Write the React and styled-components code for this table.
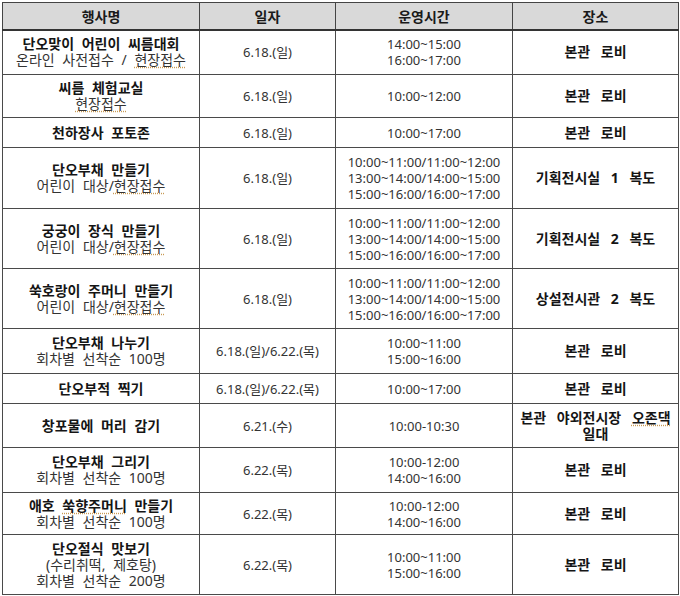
import React from 'react'
import styled, { createGlobalStyle } from 'styled-components'

const GlobalStyle = createGlobalStyle`
  html, body {
    margin: 0;
    padding: 0;
    background: #ffffff;
  }
  body {
    font-family: "Noto Sans", "Noto Sans CJK KR", sans-serif;
    color: #222;
  }
`

//-----*-----*-----*-----*-----*-----//

const rows = [
  {
    h: 45,
    name: ['단오맞이 어린이 씨름대회'],
    sub: [['온라인 사전접수 / ', { mark: '현장접수' }]],
    date: '6.18.(일)',
    time: ['14:00~15:00', '16:00~17:00'],
    place: ['본관 로비'],
  },
  {
    h: 43,
    name: ['씨름 체험교실'],
    sub: [[{ mark: '현장접수' }]],
    date: '6.18.(일)',
    time: ['10:00~12:00'],
    place: ['본관 로비'],
  },
  {
    h: 30,
    name: ['천하장사 포토존'],
    sub: [],
    date: '6.18.(일)',
    time: ['10:00~17:00'],
    place: ['본관 로비'],
  },
  {
    h: 61,
    name: ['단오부채 만들기'],
    sub: [['어린이 대상/', { mark: '현장접수' }]],
    date: '6.18.(일)',
    time: ['10:00~11:00/11:00~12:00', '13:00~14:00/14:00~15:00', '15:00~16:00/16:00~17:00'],
    place: ['기획전시실 1 복도'],
  },
  {
    h: 60,
    name: ['궁궁이 장식 만들기'],
    sub: [['어린이 대상/', { mark: '현장접수' }]],
    date: '6.18.(일)',
    time: ['10:00~11:00/11:00~12:00', '13:00~14:00/14:00~15:00', '15:00~16:00/16:00~17:00'],
    place: ['기획전시실 2 복도'],
  },
  {
    h: 60,
    name: ['쑥호랑이 주머니 만들기'],
    sub: [['어린이 대상/', { mark: '현장접수' }]],
    date: '6.18.(일)',
    time: ['10:00~11:00/11:00~12:00', '13:00~14:00/14:00~15:00', '15:00~16:00/16:00~17:00'],
    place: ['상설전시관 2 복도'],
  },
  {
    h: 45,
    name: ['단오부채 나누기'],
    sub: [['회차별 선착순 100명']],
    date: '6.18.(일)/6.22.(목)',
    time: ['10:00~11:00', '15:00~16:00'],
    place: ['본관 로비'],
  },
  {
    h: 30,
    name: ['단오부적 찍기'],
    sub: [],
    date: '6.18.(일)/6.22.(목)',
    time: ['10:00~17:00'],
    place: ['본관 로비'],
  },
  {
    h: 44,
    name: ['창포물에 머리 감기'],
    sub: [],
    date: '6.21.(수)',
    time: ['10:00-10:30'],
    place: [['본관 야외전시장 ', { mark: '오존댁' }], '일대'],
  },
  {
    h: 45,
    name: ['단오부채 그리기'],
    sub: [['회차별 선착순 100명']],
    date: '6.22.(목)',
    time: ['10:00-12:00', '14:00~16:00'],
    place: ['본관 로비'],
  },
  {
    h: 42,
    name: [['애호 ', { mark: '쑥향주머니' }, ' 만들기']],
    sub: [['회차별 선착순 100명']],
    date: '6.22.(목)',
    time: ['10:00-12:00', '14:00~16:00'],
    place: ['본관 로비'],
  },
  {
    h: 60,
    name: ['단오절식 맛보기'],
    sub: [['(수리취떡, 제호탕)'], ['회차별 선착순 200명']],
    date: '6.22.(목)',
    time: ['10:00~11:00', '15:00~16:00'],
    place: ['본관 로비'],
  },
]

// a line may be plain text or a list of pieces, some of them marked
const Line = ({ line, bold, size, gap = 4 }) => {
  const parts = Array.isArray(line) ? line : [line]
  return (
    <TextLine $bold={bold} $size={size} $gap={gap}>
      {parts.map((p, i) =>
        typeof p === 'string' ? <React.Fragment key={i}>{p}</React.Fragment> : <Marked key={i}>{p.mark}</Marked>
      )}
    </TextLine>
  )
}

const App = () => (
  <StyledApp>
    <GlobalStyle />
    <Table>
      <colgroup>
        <col style={{ width: 197 }} />
        <col style={{ width: 136 }} />
        <col style={{ width: 177 }} />
        <col style={{ width: 166 }} />
      </colgroup>
      <thead>
        <Row $h={27}>
          <HeadCell>행사명</HeadCell>
          <HeadCell>일자</HeadCell>
          <HeadCell>운영시간</HeadCell>
          <HeadCell>장소</HeadCell>
        </Row>
      </thead>
      <tbody>
        {rows.map((r, i) => (
          <Row key={i} $h={r.h}>
            <Cell>
              {r.name.map((l, j) => <Line key={j} line={l} bold size={14} />)}
              {r.sub.map((l, j) => <Line key={'s' + j} line={l} size={14} />)}
            </Cell>
            <Cell>
              <Line line={r.date} size={13} />
            </Cell>
            <Cell>
              {r.time.map((l, j) => <Line key={j} line={l} size={13} />)}
            </Cell>
            <Cell>
              {r.place.map((l, j) => <Line key={j} line={l} bold size={14} gap={7} />)}
            </Cell>
          </Row>
        ))}
      </tbody>
    </Table>
  </StyledApp>
)

const StyledApp = styled.div`
  padding: 2px;
  width: 676px;
`

const Table = styled.table`
  border-collapse: collapse;
  table-layout: fixed;
  width: 676px;
  border: 1px solid #3a3a3a;
`

const Row = styled.tr`
  height: ${(p) => p.$h}px;
`

const HeadCell = styled.th`
  background: #d9d9d9;
  border: 1px solid #444;
  border-bottom: 2px solid #333;
  font-weight: 700;
  color: #1a1a1a;
  text-align: center;
  vertical-align: middle;
  padding: 0;
  font-size: 14px;
  word-spacing: 3px;
`

const Cell = styled.td`
  border: 1px solid #4a4a4a;
  text-align: center;
  vertical-align: middle;
  padding: 0;
`

const TextLine = styled.div`
  font-size: ${(p) => p.$size}px;
  line-height: 16px;
  white-space: nowrap;
  word-spacing: ${(p) => p.$gap}px;
  font-weight: ${(p) => (p.$bold ? 700 : 400)};
  color: ${(p) => (p.$bold ? '#151515' : '#333')};
`

const Marked = styled.span`
  text-decoration: underline dotted #c89a55;
  text-underline-offset: 2px;
`

export default App
